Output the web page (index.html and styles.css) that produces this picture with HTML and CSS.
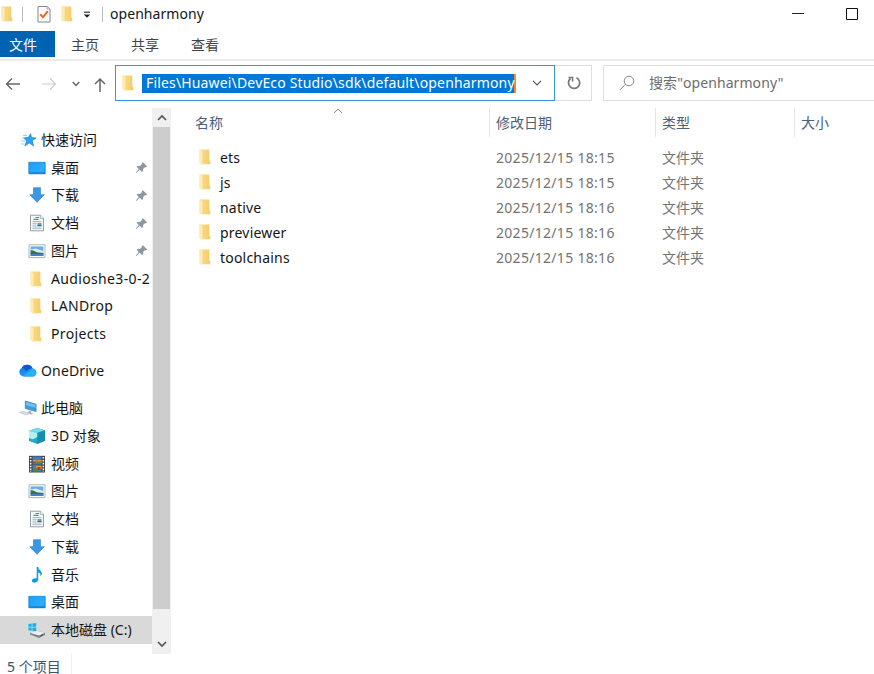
FILE: index.html
```
<!DOCTYPE html>
<html lang="zh-CN">
<head>
  <meta charset="UTF-8">
  <meta name="viewport" content="width=device-width, initial-scale=1.0">
  <title>openharmony</title>
  <link rel="stylesheet" href="styles.css">
</head>
<body>
  <!-- shared icons -->
  <svg class="sprite" width="0" height="0">
    <defs>
      <linearGradient id="g-fold" x1="0" x2="1"><stop offset="0" stop-color="#fbdf8e"/><stop offset="1" stop-color="#f3cc68"/></linearGradient>
      <linearGradient id="g-blue" x1="0" y1="0" x2="1" y2="1"><stop offset="0" stop-color="#1b9df5"/><stop offset=".6" stop-color="#27acfb"/><stop offset="1" stop-color="#078ae8"/></linearGradient>
      <linearGradient id="g-cloud" x1="0" y1="0" x2="1" y2="1"><stop offset="0" stop-color="#1470dc"/><stop offset="1" stop-color="#29b4fb"/></linearGradient>
    </defs>
    <symbol id="folder" viewBox="0 0 16 18">
      <path d="M2.5 1.5h9.8v10.8l1 .9v3H4z" fill="url(#g-fold)"/>
      <path d="M2.2 1.5L6 3.2v13L5 17l-2.8-1.9z" fill="#ffeab2"/>
      <path d="M6 3.2v12.5" stroke="#efcb70" stroke-width=".5"/>
    </symbol>
    <symbol id="star" viewBox="0 0 18 18">
      <path d="M10.6 2.6l.9 4 4.7.3-3.9 2.9 1.3 5.2-4.3-2.9-4.5 2.9 1.8-5L3.6 6.8l4.6-.2z" fill="#2ba3ee" stroke="#147dca" stroke-width=".6"/>
      <path d="M3 4.5h4M1.5 7h3M1 10h4M1 13h3.5" stroke="#8dd3f8"/>
    </symbol>
    <symbol id="desktop" viewBox="0 0 18 18">
      <path d="M.8 3.3h16.4v11.5H.8z" fill="url(#g-blue)" stroke="#087ed0" stroke-width=".7"/>
      <path d="M1.2 14h15.6" stroke="#0872bd"/><path d="M9 13.5L16.5 6v7.5z" fill="#53bffb" opacity=".35"/>
    </symbol>
    <symbol id="download" viewBox="0 0 18 18">
      <path d="M5.5 1.7h7v7h3.8L9 16.3 1.7 8.7h3.8z" fill="#3c97e5" stroke="#277cc6" stroke-width=".6"/>
    </symbol>
    <symbol id="doc" viewBox="0 0 18 18">
      <path d="M2.5 1.2h10l3 3v12.6h-13z" fill="#f5f8fa" stroke="#8a9299" stroke-width=".9"/>
      <path d="M12.3 1.2v3.2h3.2" fill="#fff" stroke="#8a9299" stroke-width=".7"/>
      <path d="M7.5 3.5H11M5.5 5.3h5" stroke="#269bd1" stroke-width="1.2"/>
      <path d="M4.5 7.7h9M4.5 9.8h4M4.5 12h4M4.5 14.2h9" stroke="#829cab" stroke-width=".8"/>
      <path d="M9.5 9h4v3.2h-4z" fill="#53a8d3"/><path d="M9.5 11h4v1.2h-4z" fill="#456a77"/>
    </symbol>
    <symbol id="picture" viewBox="0 0 18 18">
      <path d="M1 2.8h16v12.8H1z" fill="#fff" stroke="#a7abad" stroke-width=".9"/>
      <path d="M2.6 4.4h12.8V14H2.6z" fill="#68aee9"/>
      <path d="M2.6 7.5l5-1 7.8 2.5v2H2.6z" fill="#d4eef8"/>
      <path d="M2.6 8.2c3-.5 4.8 2 8 2.4l4.8.4v1.2H2.6z" fill="#356f60"/>
      <path d="M2.6 12h12.8v2H2.6z" fill="#4c80b4"/>
    </symbol>
    <symbol id="pin" viewBox="0 0 14 14">
      <path d="M8.1 1.2l4.7 4.6-1.4.8-1.1-.2-2 2.1.1 2.2-1.3 1-2.3-2.4L1 12.8l-.6-.4 3.2-4.1-2.2-2.2 1-1.1 2.6.1 2.1-2-.2-1z" transform="translate(.4 .2)" fill="#8b98a3"/>
    </symbol>
    <symbol id="cloud" viewBox="0 0 20 16">
      <path d="M5 13.4A4.5 4.5 0 0 1 3.8 5 6 6 0 0 1 14.8 5.6a4.1 4.1 0 0 1 1 7.8z" fill="url(#g-cloud)"/>
      <path d="M3.8 5A6 6 0 0 1 14.5 5.3C11 5 9.7 7.6 8 8.5 6.8 6 5.6 5 3.8 5z" fill="#0e5acb"/>
      <path d="M5.5 13.4l9.2-7.9a4.1 4.1 0 0 1 1.1 7.9z" fill="#29aefa"/>
    </symbol>
    <symbol id="computer" viewBox="0 0 20 18">
      <path d="M7.3 2l10.8 3.2v7.4L7.3 9.5z" fill="#389fe4" stroke="#54758e" stroke-width=".7"/>
      <path d="M8 3l9.5 2.8v3L8 6z" fill="#6ec1f2"/>
      <path d="M10.5 11.5l2.8.8v1.6l2.5.8-2.4.8-4.6-1.4 1.7-.8z" fill="#a8b1b8"/>
      <path d="M1 13.4l4.5-1.2 7.1 2.4-4.5 1.4z" fill="#d6dce1" stroke="#b3bdc4" stroke-width=".5"/>
    </symbol>
    <symbol id="cube" viewBox="0 0 18 18">
      <path d="M1 3.7L9.3 1 17 3.2v10.6L9.2 17 1 14z" fill="#24abc2"/>
      <path d="M1 3.7L9.3 1 17 3.2 9.2 6z" fill="#76d9e5"/><path d="M9.2 6L17 3.2v10.6L9.2 17z" fill="#168fae"/>
      <path d="M1 3.7L9.2 6v4L5 12.3 1 11z" fill="#b7f0f3"/>
    </symbol>
    <symbol id="video" viewBox="0 0 18 18">
      <path d="M1 .8h16v16.7H1z" fill="#40464b"/>
      <path d="M4.5 1.5h9v7.2h-9zM4.5 9.5h9v7.2h-9z" fill="#477bbd"/>
      <path d="M5 5h3.5v3.5H5zM9.5 5h4v3h-4zM8 11h5.5v3H8z" fill="#d99b31"/><path d="M5 6.5h3v2H5zM9.5 12h3v3h-3z" fill="#b83a30"/><path d="M9 6.5h4v2H9zM5 13h4v3H5z" fill="#508d42"/>
      <path d="M2.7 2v15M15.3 2v15" stroke="#f3f3f3" stroke-width="1.6" stroke-dasharray="1.6 1.3"/>
    </symbol>
    <symbol id="music" viewBox="0 0 18 18">
      <path d="M8.7 1h1.5c.2 3 4.2 4 3.6 7.3-.2 1-.7 1.7-1.3 2.4.5-2.8-.7-3.6-2.3-4.3v7.2c0 1.8-1.5 3.1-3.6 3.1-1.7 0-2.8-.8-2.8-2.1 0-1.6 2.3-2.9 4.9-2.3z" fill="#0c9cf0"/>
    </symbol>
    <symbol id="disk" viewBox="0 0 18 18">
      <path d="M2 12l6-2.4 9 2.2v2.1l-5.8 3L2 13.6z" fill="#7b8287"/>
      <path d="M2 12l6-2.4 9 2.2-5.8 2.7z" fill="#eceeef"/>
      <path d="M.4 3.1l3.3-.5v3.2H.4zM4.4 2.5L8.2 2v3.8H4.4zM.4 6.5h3.3v3.2l-3.3-.5zM4.4 6.5h3.8v3.8L4.4 9.8z" fill="#10b4ee"/>
      <path d="M12.5 14.8l2.3-1.1" stroke="#3f4b50"/>
    </symbol>
  </svg>

  <div class="window">
    <header class="titlebar">
      <svg class="app-icon"><use href="#folder"/></svg>
      <span class="divider"></span>
      <svg class="check-icon" viewBox="0 0 14 18"><path d="M1 1.5h9.5L13 4v13H1z" fill="#fff" stroke="#858585"/><path d="M10 1.5V4h3" fill="#eee" stroke="#999" stroke-width=".7"/><path d="M3.2 9.2l2.8 3 4.8-6" fill="none" stroke="#ed6425" stroke-width="2"/></svg>
      <svg class="quick-folder"><use href="#folder"/></svg>
      <svg class="menu-icon" viewBox="0 0 8 8"><path d="M1 1.2h6" stroke="#222" stroke-width="1.1"/><path d="M.8 3.5h6.4L4 6.8z" fill="#222"/></svg>
      <span class="divider"></span>
      <span class="title">openharmony</span>
      <svg class="minimize" viewBox="0 0 12 12"><path d="M0 5.5h12" stroke="#222"/></svg>
      <svg class="maximize" viewBox="0 0 12 12"><path d="M.5.5h11v11H.5z" fill="none" stroke="#111"/></svg>
    </header>
    <nav class="tabs">
      <span class="tab active">文件</span>
      <span class="tab">主页</span>
      <span class="tab">共享</span>
      <span class="tab">查看</span>
    </nav>
    <div class="toolbar">
      <svg class="back" viewBox="0 0 16 14"><path d="M15 7H1.5M7 1.5L1.5 7 7 12.5" fill="none" stroke="#666" stroke-width="1.4"/></svg>
      <svg class="forward" viewBox="0 0 16 14"><path d="M1 7h13.5M9 1.5L14.5 7 9 12.5" fill="none" stroke="#ccc" stroke-width="1.2"/></svg>
      <svg class="recent" viewBox="0 0 8 6"><path d="M.7 1L4 4.4 7.3 1" fill="none" stroke="#666" stroke-width="1.5"/></svg>
      <svg class="up" viewBox="0 0 12 16"><path d="M6 15V2M1 7l5-5 5 5" fill="none" stroke="#666" stroke-width="1.5"/></svg>
      <div class="address">
        <svg class="folder"><use href="#folder"/></svg>
        <span class="path">Files\Huawei\DevEco Studio\sdk\default\openharmony</span>
        <svg class="drop" viewBox="0 0 10 8"><path d="M1 1.8L5 6l4-4.2" fill="none" stroke="#555" stroke-width="1.1"/></svg>
      </div>
      <div class="refresh"><svg viewBox="0 0 14 14"><path d="M9.5 1.8A5.6 5.6 0 1 1 3.5 2.5" fill="none" stroke="#777" stroke-width="1.7"/><path d="M1.5 1.6h4.1v4" fill="none" stroke="#777" stroke-width="1.5"/></svg></div>
      <div class="search">
        <svg viewBox="0 0 16 16"><circle cx="10" cy="6" r="4.8"/><path d="M6.5 9.3L1 14.8"/></svg>
        <span>搜索"openharmony"</span>
      </div>
    </div>

    <main class="content">
      <aside class="sidebar">
        <div class="item root"><svg><use href="#star"/></svg><span>快速访问</span></div>
        <div class="item"><svg><use href="#desktop"/></svg><span>桌面</span><svg class="pin"><use href="#pin"/></svg></div>
        <div class="item"><svg><use href="#download"/></svg><span>下载</span><svg class="pin"><use href="#pin"/></svg></div>
        <div class="item"><svg><use href="#doc"/></svg><span>文档</span><svg class="pin"><use href="#pin"/></svg></div>
        <div class="item"><svg><use href="#picture"/></svg><span>图片</span><svg class="pin"><use href="#pin"/></svg></div>
        <div class="item latin"><svg class="folder"><use href="#folder"/></svg><span>Audioshe3-0-2</span></div>
        <div class="item latin"><svg class="folder"><use href="#folder"/></svg><span>LANDrop</span></div>
        <div class="item latin"><svg class="folder"><use href="#folder"/></svg><span>Projects</span></div>
        <div class="item root gap"><svg class="wide"><use href="#cloud"/></svg><span class="onedrive">OneDrive</span></div>
        <div class="item root gap"><svg class="wide"><use href="#computer"/></svg><span>此电脑</span></div>
        <div class="item"><svg><use href="#cube"/></svg><span>3D 对象</span></div>
        <div class="item"><svg><use href="#video"/></svg><span>视频</span></div>
        <div class="item"><svg><use href="#picture"/></svg><span>图片</span></div>
        <div class="item"><svg><use href="#doc"/></svg><span>文档</span></div>
        <div class="item"><svg><use href="#download"/></svg><span>下载</span></div>
        <div class="item"><svg><use href="#music"/></svg><span>音乐</span></div>
        <div class="item"><svg><use href="#desktop"/></svg><span>桌面</span></div>
        <div class="item selected"><svg><use href="#disk"/></svg><span>本地磁盘 (C:)</span></div>
      </aside>
      <div class="scrollbar">
        <svg viewBox="0 0 10 8"><path d="M1 6l4-4 4 4"/></svg>
        <div class="thumb"></div>
        <svg viewBox="0 0 10 8"><path d="M1 2l4 4 4-4"/></svg>
      </div>
      <section class="files">
        <div class="row head">
          <span>名称<svg class="sort" viewBox="0 0 10 6"><path d="M1 5l4-4 4 4" fill="none" stroke="#888"/></svg></span>
          <span>修改日期</span><span>类型</span><span>大小</span>
        </div>
        <div class="row"><span class="name"><svg><use href="#folder"/></svg>ets</span><span class="date">2025/12/15 18:15</span><span>文件夹</span></div>
        <div class="row"><span class="name"><svg><use href="#folder"/></svg>js</span><span class="date">2025/12/15 18:15</span><span>文件夹</span></div>
        <div class="row"><span class="name"><svg><use href="#folder"/></svg>native</span><span class="date">2025/12/15 18:16</span><span>文件夹</span></div>
        <div class="row"><span class="name"><svg><use href="#folder"/></svg>previewer</span><span class="date">2025/12/15 18:16</span><span>文件夹</span></div>
        <div class="row"><span class="name"><svg><use href="#folder"/></svg>toolchains</span><span class="date">2025/12/15 18:16</span><span>文件夹</span></div>
      </section>
    </main>
    <footer class="status"><span>5 个项目</span></footer>
  </div>
</body>
</html>
```
FILE: styles.css
```
* { box-sizing: border-box; }
body { margin: 0; background: #fff; color: #151515; font-family: "Noto Sans", "Noto Sans CJK SC", sans-serif; font-size: 14px; line-height: 20px; overflow: hidden; }
svg { display: block; flex: none; }
.sprite { position: absolute; }
.window { width: 874px; height: 674px; display: flex; flex-direction: column; overflow: hidden; white-space: nowrap; }

.titlebar { height: 31px; display: flex; align-items: center; padding-bottom: 3px; }
.app-icon, .quick-folder { width: 16px; height: 18px; }
.app-icon { margin-left: -1px; }
.divider { width: 1px; height: 15px; background: #bbb; }
.app-icon + .divider { margin-left: 7px; }
.check-icon { width: 14px; height: 18px; margin-left: 14px; }
.quick-folder { margin-left: 8px; }
.menu-icon { width: 8px; height: 8px; margin: 2px 11px 0 8px; }
.title { margin-left: 7px; letter-spacing: 0.05px; }
.minimize { width: 12px; height: 12px; margin-left: auto; }
.maximize { width: 12px; height: 12px; margin: 0 16px 0 42px; }

.tabs { display: flex; height: 30px; border-bottom: 2px solid #ebebeb; }
.tab { width: 60px; height: 26px; line-height: 27px; text-align: center; color: #444; }
.tab.active { width: 55px; background: #0063b1; color: #fff; padding-right: 9px; }

.toolbar { height: 47px; padding-top: 4px; display: flex; align-items: flex-start; }
.back { width: 16px; height: 14px; margin: 12px 0 0 5px; }
.forward { width: 16px; height: 14px; margin: 12px 0 0 20px; }
.recent { width: 8px; height: 6px; margin: 16px 0 0 15px; }
.up { width: 12px; height: 16px; margin: 12px 0 0 14px; }
.address { width: 440px; height: 36px; margin-left: 9px; border: 1px solid #3c94dc; display: flex; align-items: center; }
.address .folder { width: 16px; height: 18px; margin-left: 4px; }
.path { width: 374px; height: 19px; line-height: 18px; margin-left: 6px; padding-left: 4px; background: #0078d7; color: #fff; border-right: 2px solid #ff8728; letter-spacing: 0.16px; }
.drop { width: 10px; height: 8px; margin-left: 16px; }
.refresh { width: 37px; height: 36px; border: 1px solid #dedede; border-left: 0; display: flex; align-items: center; justify-content: center; }
.refresh svg { width: 14px; height: 14px; margin-left: 2px; }
.search { flex: 1; height: 36px; margin-left: 11px; border: 1px solid #dedede; border-right: 0; display: flex; align-items: center; color: #6d6d6d; letter-spacing: 0.08px; }
.search svg { width: 16px; height: 16px; margin: 0 14px 0 15px; fill: none; stroke: #888; }

.content { display: flex; height: 546px; }
.sidebar { width: 152px; padding-top: 18px; overflow: hidden; }
.item { height: 27.75px; padding-left: 28px; display: flex; align-items: center; }
.item svg { width: 18px; height: 18px; margin-right: 5px; }
.item svg.folder { width: 16px; margin-right: 7px; }
.item.latin { letter-spacing: 0.35px; }
.item.root { padding-left: 20px; }
.item.root svg { margin-right: 3px; }
.item.root svg.wide { width: 20px; margin-left: -2px; }
.onedrive { letter-spacing: 0.15px; }
.item.gap { margin-top: 9.2px; }
.item .pin { width: 13px; height: 13px; margin: 0 4px 0 auto; }
.item.selected { background: #d9d9d9; }
.scrollbar { width: 19px; background: #f0f0f0; display: flex; flex-direction: column; align-items: center; }
.scrollbar svg { width: 10px; height: 8px; margin: 6px 0 5px; fill: none; stroke: #555; stroke-width: 1.7; }
.thumb { width: 17px; height: 482px; background: #cdcdcd; }
.scrollbar svg:last-child { margin: 31px 0 0; }

.files { flex: 1; padding-left: 14px; }
.row { display: grid; grid-template-columns: 304px 166px 139px 1fr; height: 25px; align-items: center; color: #737373; }
.row > span { padding-left: 7px; }
.head { height: 29px; margin-bottom: 8px; color: #4c607a; }
.head > span { height: 29px; line-height: 30px; padding-left: 6px; border-left: 1px solid #e5e5e5; position: relative; }
.head > span:first-child { border-left: 0; padding-left: 10px; }
.sort { position: absolute; left: 148px; top: 0; width: 10px; height: 6px; }
.row .name { display: flex; align-items: center; padding-left: 12px; color: #151515; letter-spacing: 0.2px; }
.name svg { width: 16px; height: 18px; margin: 0 7px 2px 0; }
.date { letter-spacing: 0.3px; }

.status { height: 20px; padding-left: 7px; color: #3e526b; }
.status span { display: block; width: 65px; height: 20px; line-height: 25px; border-right: 1px solid #f0f0f0; }
```
